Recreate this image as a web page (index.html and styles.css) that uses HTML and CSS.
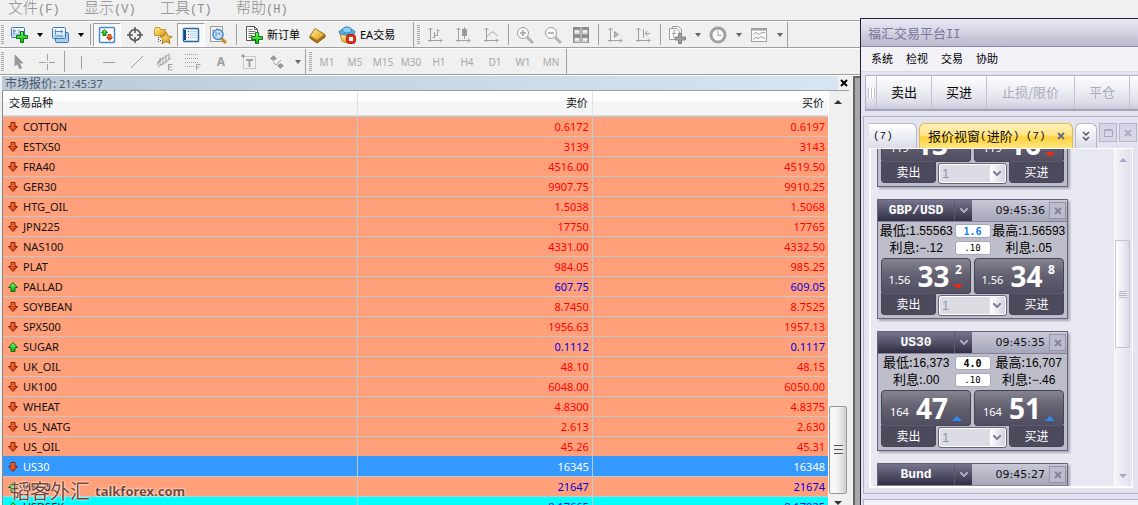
FILE: index.html
```html
<!DOCTYPE html>
<html lang="zh-CN">
<head>
<meta charset="utf-8">
<title>市场报价</title>
<link rel="stylesheet" href="styles.css">
</head>
<body>
<svg class="defs" aria-hidden="true">
  <defs>
    <linearGradient id="gGreen" x1="0" y1="0" x2="0" y2="1"><stop offset="0" stop-color="#7dff6a"/><stop offset="1" stop-color="#0cab10"/></linearGradient>
    <linearGradient id="gRed" x1="0" y1="0" x2="1" y2="1"><stop offset="0" stop-color="#ff8a50"/><stop offset="1" stop-color="#c82800"/></linearGradient>
    <linearGradient id="gGold" x1="0" y1="0" x2="1" y2="1"><stop offset="0" stop-color="#fff0a0"/><stop offset="1" stop-color="#d89a10"/></linearGradient>
    <linearGradient id="gBlue" x1="0" y1="0" x2="0" y2="1"><stop offset="0" stop-color="#ffffff"/><stop offset="1" stop-color="#b4d6f2"/></linearGradient>
  </defs>
  <symbol id="down" viewBox="0 0 10 10"><path d="M3 .5h4v4h2.500L5 9.500.5 4.500H3z" fill="url(#gRed)" stroke="#8a2000"/></symbol>
  <symbol id="up" viewBox="0 0 10 10"><path d="M3 9.500h4v-4h2.500L5 .5.5 5.500H3z" fill="url(#gGreen)" stroke="#0a6a10"/></symbol>
  <symbol id="caret" viewBox="0 0 6 4"><path d="M0 0h6L3 4z"/></symbol>
  <symbol id="plus" viewBox="0 0 12 12"><path d="M4.500.5h3v4h4v3h-4v4h-3v-4h-4v-3h4z" fill="url(#gGreen)" stroke="#087a10"/></symbol>
  <symbol id="chev" viewBox="0 0 8 6"><path d="M0 0h2v1h1v1h2V1h1V0h2v2H7v1H6v1H5v1H3V4H2V3H1V2H0z"/></symbol>
  <symbol id="x" viewBox="0 0 8 8"><path d="M1 1l6 6M7 1L1 7" stroke-width="2" fill="none"/></symbol>
</svg>

<main class="terminal">
  <nav class="menubar">
    <button>文件<span>(F)</span></button><button>显示<span>(V)</span></button><button>工具<span>(T)</span></button><button>帮助<span>(H)</span></button>
  </nav>

  <div class="strip">
    <div class="toolbar">
      <i class="grip"></i>
      <button class="tool" aria-label="新图表"><svg width="18" height="18"><rect x="1.500" y="1.500" width="13" height="10" rx="1" fill="url(#gBlue)" stroke="#3878b0"/><path d="M4 3v6M3 5h3M6 9h4M9 3.500v4" stroke="#5a8ab8" fill="none"/><use href="#plus" x="6" y="5" width="12" height="12"/></svg></button>
      <button class="drop" aria-label="展开"><svg width="6" height="4"><use href="#caret"/></svg></button>
      <button class="tool" aria-label="窗口组合"><svg width="18" height="18"><rect x="4.500" y="6.500" width="13" height="10" rx="1" fill="#a9cdec" stroke="#3878b0"/><rect x="1.500" y="1.500" width="13" height="11" rx="1" fill="url(#gBlue)" stroke="#3878b0"/><path d="M4.500 3.500v5M3.500 5.500H12M10.500 4v3M3.500 10H12" stroke="#5a8ab8" fill="none"/></svg></button>
      <button class="drop" aria-label="展开"><svg width="6" height="4"><use href="#caret"/></svg></button>
      <i class="sep"></i>
      <button class="tool on" aria-label="市场报价"><svg width="18" height="18"><rect x="1.500" y="1.500" width="15" height="15" rx="1" fill="#fff" stroke="#3f8ccf" stroke-width="1.500"/><path d="M6.500 3.500L9.500 6.500H8v3H5v-3H3.500z" fill="url(#gGreen)" stroke="#087a10"/><path d="M11.500 14.500l-3-3H10v-3h3v3h1.500z" fill="url(#gRed)" stroke="#c84a10"/></svg></button>
      <button class="tool" aria-label="数据窗口"><svg width="18" height="18" fill="none" stroke="#555" stroke-width="1.500"><circle cx="9" cy="9" r="5.500"/><path d="M9 1v6M9 11v6M1 9h6M11 9h6"/></svg></button>
      <button class="tool" aria-label="导航"><svg width="20" height="18"><path d="M1.500 3.500l1-2h4l1 2h5v6h-11z" fill="url(#gGold)" stroke="#c89a20"/><path d="M5.500 11v6M7 14.500h2" stroke="#444" stroke-dasharray="1 1"/><path d="M13 6l2 4 4 .5-3 3 1 4-4-2-4 2 1-4-3-3 4-.5z" fill="url(#gGold)" stroke="#b07a10"/></svg></button>
      <button class="tool on" aria-label="终端"><svg width="18" height="18"><rect x="1.500" y="2.500" width="15" height="13" rx="1" fill="#eef6fd" stroke="#2468b0" stroke-width="1.500"/><path d="M3 4v10" stroke="#17447c" stroke-width="2"/><path d="M6 5.500h1M6 8.500h1M6 11.500h1" stroke="#e02020"/><path d="M8 5.500h7M8 7.500h7M8 9.500h7M8 11.500h7" stroke="#b8d4ee"/></svg></button>
      <button class="tool" aria-label="策略测试"><svg width="20" height="18"><rect x="1.500" y=".5" width="12" height="15" fill="#f6f6f6" stroke="#999"/><path d="M4 3v3M8 2v3M11 4v6" stroke="#999"/><path d="M12 12l5 5" stroke="#c8902a" stroke-width="3"/><circle cx="9" cy="8.500" r="5" fill="#c4e0f8" fill-opacity=".85" stroke="#4a88c4" stroke-width="1.500"/><path d="M7 6v5M7 9.500l3-3 1 3" stroke="#6a9ac8" fill="none"/></svg></button>
      <i class="sep"></i>
      <button class="wide order"><svg width="18" height="18"><path d="M1.500.5h8l3 3v11h-11z" fill="#fff" stroke="#555"/><path d="M9.500.5v3h3" fill="none" stroke="#555"/><path d="M3.500 3.500h4M3.500 5.500h7M3.500 7.500h7M3.500 9.500h4M3.500 11.500h3" stroke="#777"/><use href="#plus" x="6" y="6" width="12" height="12"/></svg>新订单</button>
      <button class="tool" aria-label="编辑器"><svg width="18" height="18"><path d="M1 10l7 4.500 8-6v2.500l-8 6L1 12z" fill="#b87818" stroke="#7a4c0c"/><path d="M6 2.500l10 6-8 6-7-4.500z" fill="url(#gGold)" stroke="#a8700c"/></svg></button>
      <button class="wide auto"><svg width="18" height="18"><path d="M2 7l2 8 5 2 5-2 2-8z" fill="url(#gGold)" stroke="#b88418"/><ellipse cx="9" cy="6" rx="8" ry="3" fill="#5ab4e8" stroke="#3080b8"/><ellipse cx="9" cy="4" rx="4.500" ry="3" fill="#8ad0f4" stroke="#3080b8"/><rect x="8.500" y="8.500" width="9" height="9" rx="3" fill="#e03018" stroke="#a81808"/><rect x="11" y="11" width="4" height="4" fill="#fff"/></svg>EA交易</button>
    </div>
    <div class="toolbar gray">
      <i class="grip"></i>
      <button class="tool" aria-label="柱状图"><svg width="16" height="16"><path d="M3.500 1v14M1 13.500h14M1.500 3l2-2 2 2M13 11.500l2 2-2 2M7.500 5v6M5.500 10.500h2M10.500 2v7M10.500 3.500h2M8 8.500h2" /></svg></button>
      <button class="tool" aria-label="阴阳烛"><svg width="16" height="16"><path d="M3.500 1v14M1 13.500h14M1.500 3l2-2 2 2M13 11.500l2 2-2 2M9.500 0v12"/><rect x="7.500" y="2.500" width="4" height="6" fill="#999"/></svg></button>
      <button class="tool" aria-label="折线图"><svg width="16" height="16"><path d="M3.500 1v14M1 13.500h14M1.500 3l2-2 2 2M13 11.500l2 2-2 2M3.500 10l5-5h2l4 4"/></svg></button>
      <i class="sep"></i>
      <button class="tool" aria-label="放大"><svg width="18" height="18"><path d="M11 11l6 6" stroke-width="3" stroke="#b4b4b4"/><circle cx="7" cy="7" r="5.500" fill="#fafafa"/><path d="M4 7h6M7 4v6" stroke-width="1.500"/></svg></button>
      <button class="tool" aria-label="缩小"><svg width="18" height="18"><path d="M11 11l6 6" stroke-width="3" stroke="#b4b4b4"/><circle cx="7" cy="7" r="5.500" fill="#fafafa"/><path d="M4 7h6" stroke-width="1.500"/></svg></button>
      <button class="tool" aria-label="平铺"><svg width="16" height="16"><path fill="#8a8a8a" stroke="none" d="M0 0h16v16H0z"/><path d="M1.500 3h5v4h-5zM9.500 3h5v4h-5zM1.500 11h5v4h-5zM9.500 11h5v4h-5z" fill="#fafafa" stroke="#bbb"/><path d="M2 5.500h4M10 5.500h4M2 13.500h4M10 13.500h4M8 0v16" stroke="#ddd"/></svg></button>
      <i class="sep"></i>
      <button class="tool" aria-label="自动滚动"><svg width="16" height="16"><path d="M3.500 1v14M1 13.500h14M1.500 3l2-2 2 2M13 11.500l2 2-2 2"/><path d="M7.500 4.500v6l4-3z" fill="#bbb"/></svg></button>
      <button class="tool" aria-label="图表平移"><svg width="16" height="16"><path d="M3.500 1v14M1 13.500h14M1.500 3l2-2 2 2M13 11.500l2 2-2 2M8.500 2v9M10 6.500h5M12.500 4l-2.500 2.500 2.500 2.500"/></svg></button>
      <i class="sep"></i>
      <button class="tool" aria-label="指标"><svg width="18" height="18"><path d="M4.500.5h6l3 3v10h-9z" fill="#f0f0f0"/><path d="M1.500 2.500h7l3 3v8h-10z" fill="#fff"/><path d="M8 4.500c-3-1-2 2-2.500 7M4 7.500h4"/><path d="M10.500 7.500h3v3.500h4v3h-4v3.500h-3V14H7v-3h3.500z" fill="#a0a0a0" stroke="#808080"/></svg></button>
      <button class="drop" aria-label="展开"><svg width="6" height="4"><use href="#caret"/></svg></button>
      <button class="tool" aria-label="周期"><svg width="18" height="18"><circle cx="9" cy="9" r="7" fill="#fafafa" stroke-width="3"/><path d="M9 5v4.500h3.500"/></svg></button>
      <button class="drop" aria-label="展开"><svg width="6" height="4"><use href="#caret"/></svg></button>
      <button class="tool" aria-label="模板"><svg width="18" height="16"><rect x="1.500" y="1.500" width="15" height="13" fill="#fafafa"/><path d="M2 2.500h14" stroke-width="2"/><path d="M3 7.500l3-2 3 2 3-2h3M3 12.500l3-2 2 1 3-2 4 2"/></svg></button>
      <button class="drop" aria-label="展开"><svg width="6" height="4"><use href="#caret"/></svg></button>
    </div>
  </div>

  <div class="strip">
    <div class="toolbar gray">
      <i class="grip"></i>
      <button class="tool" aria-label="指针"><svg width="14" height="16"><path d="M3 1l8 8H7.500l2 5-2 1-2-5L3 12z" fill="#999"/></svg></button>
      <button class="tool" aria-label="十字"><svg width="16" height="16"><path d="M8.500 0v6.500M8.500 10v6M0 8.500h6.500M10 8.500h6M8 8.500h1"/></svg></button>
      <i class="sep"></i>
      <button class="tool" aria-label="垂直线"><svg width="16" height="16"><path d="M8.500 2v13"/></svg></button>
      <button class="tool" aria-label="水平线"><svg width="16" height="16"><path d="M2 8.500h12"/></svg></button>
      <button class="tool" aria-label="趋势线"><svg width="16" height="16"><path d="M2 14L14 2"/></svg></button>
      <button class="tool" aria-label="等距通道"><svg width="18" height="18"><path d="M1 10L13 1M2 14l13-9M4 5v8M7 4v8M10 2v8M13 1v6M1 12l4-7M12.500 11.500h4M12.500 14h3M12.500 17h4M12.500 11v6"/></svg></button>
      <button class="tool" aria-label="斐波纳契"><svg width="18" height="18"><path stroke-dasharray="1 1" d="M1 1.500h14M1 5.500h14M1 9.500h14M1 13.500h9"/><path d="M12.500 17v-5.500h4M12.500 14h3"/></svg></button>
      <button class="tool letter">A</button>
      <button class="tool" aria-label="文字标签"><svg width="16" height="16"><path stroke-dasharray="1 1" d="M2.500 2.500h12v12h-12z"/><path d="M5 6h7M8.500 6v7" stroke-width="2"/><path d="M1 1h2v2H1z" fill="#999"/></svg></button>
      <button class="tool" aria-label="箭头"><svg width="16" height="16"><path d="M4.500 1.500L1.500 4.500 4.500 6.500l3-2zM8.500 11.500l3-2 3 2-3 3z" fill="#999"/><path d="M4 8l3 3 5-5"/></svg></button>
      <button class="drop" aria-label="展开"><svg width="6" height="4"><use href="#caret"/></svg></button>
    </div>
    <div class="toolbar periods">
      <i class="grip"></i>
      <button class="tool">M1</button><button class="tool">M5</button><button class="tool">M15</button><button class="tool">M30</button><button class="tool">H1</button><button class="tool">H4</button><button class="tool">D1</button><button class="tool">W1</button><button class="tool">MN</button>
    </div>
  </div>

  <div class="workspace">
    <section class="watch">
      <header class="watch-title"><h2>市场报价: <span>21:45:37</span></h2><button aria-label="关闭"><svg width="8" height="8" stroke="#000"><use href="#x"/></svg></button></header>
      <div class="watch-body">
        <div class="sheet">
        <table>
          <colgroup><col class="c-name"><col><col></colgroup>
          <thead><tr><th>交易品种</th><th>卖价</th><th>买价</th></tr></thead>
          <tbody>
            <tr><td><svg class="dir"><use href="#down"/></svg>COTTON</td><td>0.6172</td><td>0.6197</td></tr>
            <tr><td><svg class="dir"><use href="#down"/></svg>ESTX50</td><td>3139</td><td>3143</td></tr>
            <tr><td><svg class="dir"><use href="#down"/></svg>FRA40</td><td>4516.00</td><td>4519.50</td></tr>
            <tr><td><svg class="dir"><use href="#down"/></svg>GER30</td><td>9907.75</td><td>9910.25</td></tr>
            <tr><td><svg class="dir"><use href="#down"/></svg>HTG_OIL</td><td>1.5038</td><td>1.5068</td></tr>
            <tr><td><svg class="dir"><use href="#down"/></svg>JPN225</td><td>17750</td><td>17765</td></tr>
            <tr><td><svg class="dir"><use href="#down"/></svg>NAS100</td><td>4331.00</td><td>4332.50</td></tr>
            <tr><td><svg class="dir"><use href="#down"/></svg>PLAT</td><td>984.05</td><td>985.25</td></tr>
            <tr class="rise"><td><svg class="dir"><use href="#up"/></svg>PALLAD</td><td>607.75</td><td>609.05</td></tr>
            <tr><td><svg class="dir"><use href="#down"/></svg>SOYBEAN</td><td>8.7450</td><td>8.7525</td></tr>
            <tr><td><svg class="dir"><use href="#down"/></svg>SPX500</td><td>1956.63</td><td>1957.13</td></tr>
            <tr class="rise"><td><svg class="dir"><use href="#up"/></svg>SUGAR</td><td>0.1112</td><td>0.1117</td></tr>
            <tr><td><svg class="dir"><use href="#down"/></svg>UK_OIL</td><td>48.10</td><td>48.15</td></tr>
            <tr><td><svg class="dir"><use href="#down"/></svg>UK100</td><td>6048.00</td><td>6050.00</td></tr>
            <tr><td><svg class="dir"><use href="#down"/></svg>WHEAT</td><td>4.8300</td><td>4.8375</td></tr>
            <tr><td><svg class="dir"><use href="#down"/></svg>US_NATG</td><td>2.613</td><td>2.630</td></tr>
            <tr><td><svg class="dir"><use href="#down"/></svg>US_OIL</td><td>45.26</td><td>45.31</td></tr>
            <tr class="selected"><td><svg class="dir"><use href="#down"/></svg>US30</td><td>16345</td><td>16348</td></tr>
            <tr class="rise"><td><svg class="dir"><use href="#up"/></svg>HK50</td><td>21647</td><td>21674</td></tr>
            <tr class="rise fresh"><td><svg class="dir"><use href="#up"/></svg>USDSEKpro</td><td>8.17665</td><td>8.17925</td></tr>
          </tbody>
        </table>
        </div>
        <div class="scroll">
          <svg width="8" height="4" fill="#333"><path d="M0 4h8L4 0z"/></svg>
          <i class="space"></i>
          <i class="thumb"></i>
          <svg width="8" height="4" fill="#333"><path d="M0 0h8L4 4z"/></svg>
        </div>
      </div>
      <p class="mark">韬客外汇<span>talkforex.com</span></p>
    </section>
    <div class="canvas"></div>
  </div>
</main>

<section class="fx">
  <h1>福汇交易平台<span>II</span></h1>
  <nav class="fx-menu"><button>系统</button><button>检视</button><button>交易</button><button>协助</button></nav>
  <div class="fx-tools"><i class="fx-grip"></i><button>卖出</button><button>买进</button><button class="long" disabled>止损/限价</button><button disabled>平仓</button><i class="fx-end"></i></div>
  <div class="panel">
    <div class="tabs">
      <button class="tab">(7)</button>
      <button class="tab active">报价视窗<span>(</span>进阶<span>) (7)</span><svg width="8" height="8" stroke="#6c6a80"><use href="#x"/></svg></button>
      <button class="tab more" aria-label="更多"><svg width="8" height="10" fill="none" stroke="#55536a" stroke-width="1.500"><path d="M1 1l3 3 3-3M1 6l3 3 3-3"/></svg></button>
      <button class="win" aria-label="最大化"><svg width="9" height="8" fill="none" stroke="#a9a8c4"><path d="M.5.5h8v7h-8zM0 1.500h9"/></svg></button>
      <button class="win" aria-label="关闭"><svg width="8" height="8" stroke="#a9a8c4"><use href="#x"/></svg></button>
    </div>
    <div class="view">
      <div class="cards">
        <article class="card partial">
          <div class="quotes">
            <button class="quote"><span class="rate"><small>119</small><b>13</b><i class="tick"></i></span><span class="side">卖出</span></button>
            <button class="quote buy"><span class="rate"><small>119</small><b>16</b><i class="tick"><svg width="10" height="5" fill="#f02818"><path d="M0 0h10L5 5z"/></svg></i></span><span class="side">买进</span></button>
            <label class="lots"><select aria-label="手数"><option>1</option></select><svg width="8" height="6"><use href="#chev"/></svg></label>
          </div>
        </article>

        <article class="card">
          <header><h3>GBP/USD</h3><button class="pick" aria-label="选择"><svg width="8" height="6"><use href="#chev"/></svg></button><time>09:45:36</time><button class="shut" aria-label="关闭"><svg width="8" height="8"><use href="#x"/></svg></button></header>
          <div class="info">
            <p>最低:<span>1.55563</span></p><output class="spread blue">1.6</output><p>最高:<span>1.56593</span></p>
            <p>利息:<span>−.12</span></p><output class="spread lot">.10</output><p>利息:<span>.05</span></p>
          </div>
          <div class="quotes">
            <button class="quote"><span class="rate"><small>1.56</small><b>33</b><i class="tick"><sup>2</sup><svg width="10" height="5" fill="#f02818"><path d="M0 0h10L5 5z"/></svg></i></span><span class="side">卖出</span></button>
            <button class="quote buy"><span class="rate"><small>1.56</small><b>34</b><i class="tick"><sup>8</sup></i></span><span class="side">买进</span></button>
            <label class="lots"><select aria-label="手数"><option>1</option></select><svg width="8" height="6"><use href="#chev"/></svg></label>
          </div>
        </article>

        <article class="card">
          <header><h3>US30</h3><button class="pick" aria-label="选择"><svg width="8" height="6"><use href="#chev"/></svg></button><time>09:45:35</time><button class="shut" aria-label="关闭"><svg width="8" height="8"><use href="#x"/></svg></button></header>
          <div class="info">
            <p>最低:<span>16,373</span></p><output class="spread">4.0</output><p>最高:<span>16,707</span></p>
            <p>利息:<span>.00</span></p><output class="spread lot">.10</output><p>利息:<span>−.46</span></p>
          </div>
          <div class="quotes">
            <button class="quote"><span class="rate"><small>164</small><b>47</b><i class="tick"><svg width="10" height="5" fill="#2a8cf4"><path d="M0 5h10L5 0z"/></svg></i></span><span class="side">卖出</span></button>
            <button class="quote buy"><span class="rate"><small>164</small><b>51</b><i class="tick"><svg width="10" height="5" fill="#2a8cf4"><path d="M0 5h10L5 0z"/></svg></i></span><span class="side">买进</span></button>
            <label class="lots"><select aria-label="手数"><option>1</option></select><svg width="8" height="6"><use href="#chev"/></svg></label>
          </div>
        </article>

        <article class="card">
          <header><h3>Bund</h3><button class="pick" aria-label="选择"><svg width="8" height="6"><use href="#chev"/></svg></button><time>09:45:27</time><button class="shut" aria-label="关闭"><svg width="8" height="8"><use href="#x"/></svg></button></header>
          <div class="info"></div>
        </article>
      </div>
      <div class="fx-scroll">
        <svg width="8" height="4"><path d="M0 4h8L4 0z"/></svg>
        <i class="fx-space"></i><i class="fx-thumb"></i><i class="fx-rest"></i>
        <svg width="8" height="4"><path d="M0 0h8L4 4z"/></svg>
      </div>
    </div>
  </div>
  <div class="panel next"></div>
</section>
</body>
</html>
```
FILE: styles.css
```css
* { box-sizing: border-box; }
body {
  margin: 0;
  height: 100vh;
  overflow: hidden;
  position: relative;
  background: #f0f0f0;
  color: #111;
  font: 12px/16px "Noto Sans", "Noto Sans CJK SC", sans-serif;
}
button {
  margin: 0; padding: 0; border: 0;
  background: none; color: inherit; font: inherit;
  white-space: nowrap;
}
h1, h2, h3, p { margin: 0; font: inherit; }
svg { display: block; flex: none; }
.defs { position: absolute; width: 0; height: 0; }

/* terminal window */
.terminal { display: flex; flex-direction: column; height: 100%; }
.menubar {
  display: flex; align-items: flex-start; flex: none;
  height: 21px; padding-left: 8px;
  border-bottom: 1px solid #a0a0a0;
  color: #8c8c8c;
  font: 300 15px/13px "Noto Sans CJK SC", sans-serif;
}
.menubar button { width: 76px; text-align: left; }
.menubar span { font: 12px/13px "Liberation Mono", monospace; }

.strip {
  display: flex; gap: 2px; flex: none;
  height: 27px;
  border-top: 1px solid #fff;
  border-bottom: 1px solid #a0a0a0;
}
.toolbar {
  display: flex; align-items: center; flex: none;
  padding-right: 1px;
  border-right: 1px solid #a0a0a0;
}
.grip {
  flex: none; width: 3px; height: 20px; margin: 0 1px;
  background: repeating-linear-gradient(#a8a8a8 0 1px, #f0f0f0 1px 2px);
}
.tool { display: flex; flex: none; align-items: center; justify-content: center; width: 28px; height: 24px; }
.tool.on { background: #f8f8f8; border: 1px solid; border-color: #a0a0a0 #fff #fff #a0a0a0; background-clip: content-box; }
.drop { display: flex; flex: none; align-items: center; justify-content: center; width: 13px; height: 24px; }
.sep { flex: none; width: 6px; height: 21px; background: linear-gradient(#a0a0a0, #a0a0a0) center / 1px 100% no-repeat; }
.wide { display: flex; align-items: center; gap: 4px; padding: 0 4px 0 6px; color: #000; font-size: 11px; }
.wide.auto { padding-right: 17px; }
.gray svg { fill: none; stroke: #a0a0a0; }
.gray .drop svg { fill: #666; stroke: none; }
.letter { color: #a0a0a0; font: bold 12px "Noto Sans", sans-serif; }
.periods { color: #a8a8a8; font-size: 10px; }

.workspace { display: flex; flex: 1; min-height: 0; border-top: 1px solid #fff; }
.watch { position: relative; display: flex; flex-direction: column; width: 853px; padding: 0 4px 0 2px; }
.canvas { flex: 1; background: #a8a8a8; border: 2px solid #666; border-right: 0; border-bottom: 0; }
.watch-title { display: flex; flex: none; height: 15px; border-bottom: 1px solid #a0a0a0; }
.watch-title h2 {
  flex: 1; padding-left: 3px;
  background: linear-gradient(90deg, #bccad8, #d7e4f2);
  color: #48586a;
  font: 12px/14px "Noto Sans CJK SC", sans-serif;
}
.watch-title span { font: 11px/14px "Noto Sans", sans-serif; }
.watch-title button { display: flex; align-items: center; justify-content: center; width: 11px; }
.watch-body { display: flex; flex: 1; min-height: 0; }
.sheet { flex: 1; overflow: hidden; border-left: 1px solid #888; }
table { width: 100%; border-collapse: separate; border-spacing: 0; table-layout: fixed; font-size: 11px; line-height: 19px; }
.c-name { width: 43%; }
th {
  height: 25px; padding: 0 4px 0 6px;
  background: linear-gradient(#fff 40%, #f3f5f7 40%);
  border-right: 1px solid #dde0e4; border-bottom: 1px solid #dcdcdc;
  font-weight: 400; line-height: 22px; text-align: right;
}
th:first-child { text-align: left; }
td {
  height: 20px; padding: 0 3px 0 0;
  background: #ffa07a;
  border-top: 1px solid #c0c8cc; border-right: 1px solid #c0c8cc;
  color: #f00; text-align: right;
}
td:last-child, th:last-child { border-right: 0; }
td:first-child { display: flex; align-items: center; gap: 5px; padding-left: 5px; color: #111; }
.dir { width: 10px; height: 10px; }
.rise td { color: #0000e0; }
.rise td:first-child { color: #111; }
.selected td, .selected td:first-child { background: #3399ff; border-top-color: #3399ff; color: #fff; }
.fresh td { background: #0ff; }
.scroll { display: flex; flex-direction: column; align-items: center; width: 21px; padding: 9px 2px 0 0; background: #f0f0f0; border-left: 1px solid #fff; }
.scroll .space { flex: 1; }
.scroll .thumb {
  width: 18px; height: 88px; margin-bottom: 7px;
  border: 1px solid #989898; border-radius: 2px;
  background:
    repeating-linear-gradient(#555 0 1px, #eee 1px 4px) center / 9px 10px no-repeat,
    linear-gradient(90deg, #f6f6f6 40%, #d0d0d4);
}
.mark {
  position: absolute; left: 10px; bottom: 4px;
  display: flex; align-items: center; gap: 5px;
  color: #7a4434;
  font: 20px/20px "Noto Sans CJK SC", sans-serif;
  text-shadow: 0 0 2px #fff, 0 0 2px #fff;
}
.mark span { font: bold 13px/20px "Noto Sans", sans-serif; }

/* second platform window */
.fx {
  position: absolute; left: 860px; top: 18px; right: 0; bottom: 0;
  display: flex; flex-direction: column;
  overflow: hidden;
  border-left: 1px solid #22203a; border-top: 1px solid #22203a;
  background: #e4e4f0;
  font-family: "Noto Sans CJK SC", sans-serif;
}
.fx h1 {
  flex: none; height: 28px; padding-left: 7px;
  background: linear-gradient(#ebebf5, #b9b9ce);
  border-bottom: 1px solid #8c8ca8;
  color: #77769a; font-size: 13px; line-height: 27px;
}
.fx h1 span { font: 12px "Liberation Mono", monospace; }
.fx-menu { display: flex; flex: none; gap: 13px; height: 25px; padding: 0 0 2px 10px; background: #f2f2f8; border-bottom: 1px solid #dadae6; color: #000; font-size: 11px; }
.fx-tools {
  display: flex; flex: none; height: 36px; margin: 3px 0 0 4px;
  border: 1px solid #b0b0c8; border-right: 0; border-bottom: 2px solid #a4a4bc;
  background: linear-gradient(#fff, #dedeea 80%, #c8c8da);
  color: #000; font-size: 13px; line-height: 30px;
}
.fx-tools button { width: 55px; padding-bottom: 2px; border-left: 1px solid #c2c2d4; }
.fx-tools .long { width: 88px; }
.fx-tools button:disabled { color: #aaaabd; }
.fx-grip { width: 10px; background: repeating-linear-gradient(90deg, #c0c0d0 0 1px, #fff 1px 3px) center / 7px 10px no-repeat; }
.fx-end { border-left: 1px solid #c2c2d4; }
.panel {
  display: flex; flex-direction: column; flex: 1; min-height: 0;
  margin: 5px 0 0 2px; padding: 6px 5px 5px 5px;
  border: 1px solid #b0b0c8; border-right: 0;
}
.panel.next { flex: none; height: 6px; padding: 0; border-bottom: 0; background: #f2f2f8; }
.tabs { display: flex; flex: none; align-items: flex-start; gap: 2px; height: 25px; margin-right: -6px; }
.tab {
  height: 25px; border: 1px solid #b4b4ca; border-bottom: 0; border-radius: 6px 6px 0 0;
  background: linear-gradient(#fff, #dcdcea);
  color: #111; font-size: 13px;
}
.tab:first-child { width: 48px; padding-left: 4px; border-left: 0; border-top-left-radius: 0; text-align: left; font: 11px "Liberation Mono", monospace; }
.tab.active {
  display: flex; align-items: center; width: 154px; padding-left: 8px;
  border-color: #e0b850;
  background: linear-gradient(#fff2b8, #ffe48c 45%, #ffd23c 55%, #ffe680);
}
.tab.active span { font: 11px "Liberation Mono", monospace; white-space: pre; }
.tab.active svg { margin-left: auto; margin-right: 7px; }
.tab.more { display: flex; justify-content: center; align-items: center; width: 22px; }
.win { display: flex; align-items: center; justify-content: center; width: 18px; height: 19px; border: 1px solid #b4b4ca; background: #d6d6e6; }
.view {
  display: flex; flex: 1; min-height: 0;
  border: 1px solid #fff; border-width: 1px 1px 2px 2px;
  background: #e8e8f2;
}
.cards { display: flex; flex-direction: column; flex: 1; gap: 12px; overflow: hidden; padding-left: 6px; }
.card { flex: none; width: 191px; border: 1px solid #66647a; background: #bebeca; box-shadow: 2px 2px 2px #a8a8b8; }
.card.partial { margin-top: -26px; }
.card header { display: flex; height: 22px; background: linear-gradient(#c8c8d8, #a6a6ba); border-bottom: 1px solid #85839a; }
.card h3 {
  width: 76px; background: linear-gradient(#77758e, #302e42); color: #fff;
  font: bold 13px/22px "Liberation Mono", monospace; text-align: center;
}
.pick { display: flex; align-items: center; justify-content: center; width: 18px; background: linear-gradient(#77758e, #302e42); border-left: 1px solid #5a5870; fill: #a6a4bc; }
.card time { flex: 1; padding-right: 4px; color: #111; font: 11px/22px "DejaVu Sans", sans-serif; text-align: right; }
.shut { display: flex; align-items: center; justify-content: center; width: 17px; margin: 2px 1px 2px 0; border: 1px solid #9492aa; background: #bcbccc; stroke: #85839c; }
.info {
  display: grid; grid-template-columns: 1fr 36px 1fr; grid-auto-rows: 17px; align-items: center;
  min-height: 34px; color: #000; font-size: 13px; line-height: 16px; text-align: center;
}
.info p { display: flex; align-items: baseline; justify-content: center; white-space: nowrap; }
.info p span { font: 12px/16px "Liberation Sans", sans-serif; }
.spread { height: 14px; border: 1px solid #a8a8ba; border-radius: 3px; background: #fff; font: bold 10px/13px "DejaVu Sans Mono", monospace; }
.spread.blue { color: #0a84f0; }
.spread.lot { font: 9px/13px "DejaVu Sans Mono", monospace; }
.quotes { position: relative; display: grid; grid-template-columns: 1fr 1fr; gap: 3px; padding: 2px 3px 3px 3px; }
.quote { display: flex; flex-direction: column; align-items: flex-start; color: #fff; }
.quote.buy { align-items: flex-end; }
.rate {
  display: flex; align-items: center; justify-content: center; gap: 7px;
  width: 100%; height: 36px;
  border: 1px solid #454356; border-radius: 4px 4px 3px 3px;
  background: linear-gradient(#85838f, #615f70 50%, #504e60);
}
.rate small { padding-top: 7px; font: 11px/20px "Noto Sans", sans-serif; }
.rate b { font: bold 28px/34px "Noto Sans", sans-serif; }
.tick { display: flex; flex-direction: column; justify-content: flex-end; width: 10px; height: 30px; margin-left: -3px; padding-bottom: 2px; font-style: normal; }
.tick sup { margin-bottom: auto; font: bold 12px/18px "Noto Sans", sans-serif; }
.side {
  width: 55px; height: 22px; margin-top: -1px;
  border: 1px solid #454356; border-top-color: #5c5a6c; border-radius: 0 0 4px 4px;
  background: #4c4a5c; font-size: 12px; line-height: 19px;
}
.lots {
  position: absolute; left: 60px; right: 60px; bottom: 2px;
  display: flex; align-items: center; justify-content: flex-end;
  height: 21px; padding-right: 5px;
  border: 1px solid #66647a; border-radius: 3px;
  background: linear-gradient(90deg, #dcdce4 51px, #fff 51px, #cfcfe0);
  fill: #85839c;
}
.lots select {
  position: absolute; inset: 0; width: 100%; padding: 0 0 0 2px;
  appearance: none; border: 1px solid #fff; border-radius: 3px; background: none;
  color: #8f9ab0; font: 13px/17px "Liberation Sans", sans-serif;
}
.fx-scroll { display: flex; flex-direction: column; align-items: center; width: 16px; padding: 9px 0 8px 0; background: linear-gradient(90deg, #f4f4fa, #e2e2ee); fill: #a9a8c4; margin-right: 2px; border-left: 1px solid #fff; }
.fx-space { flex: 78; }
.fx-rest { flex: 126; }
.fx-thumb {
  width: 15px; height: 108px; border: 1px solid #c4c4d8;
  background:
    repeating-linear-gradient(#b4b4ca 0 1px, #f0f0f8 1px 2px) center / 8px 7px no-repeat,
    linear-gradient(90deg, #fff, #dadae8);
}
```
